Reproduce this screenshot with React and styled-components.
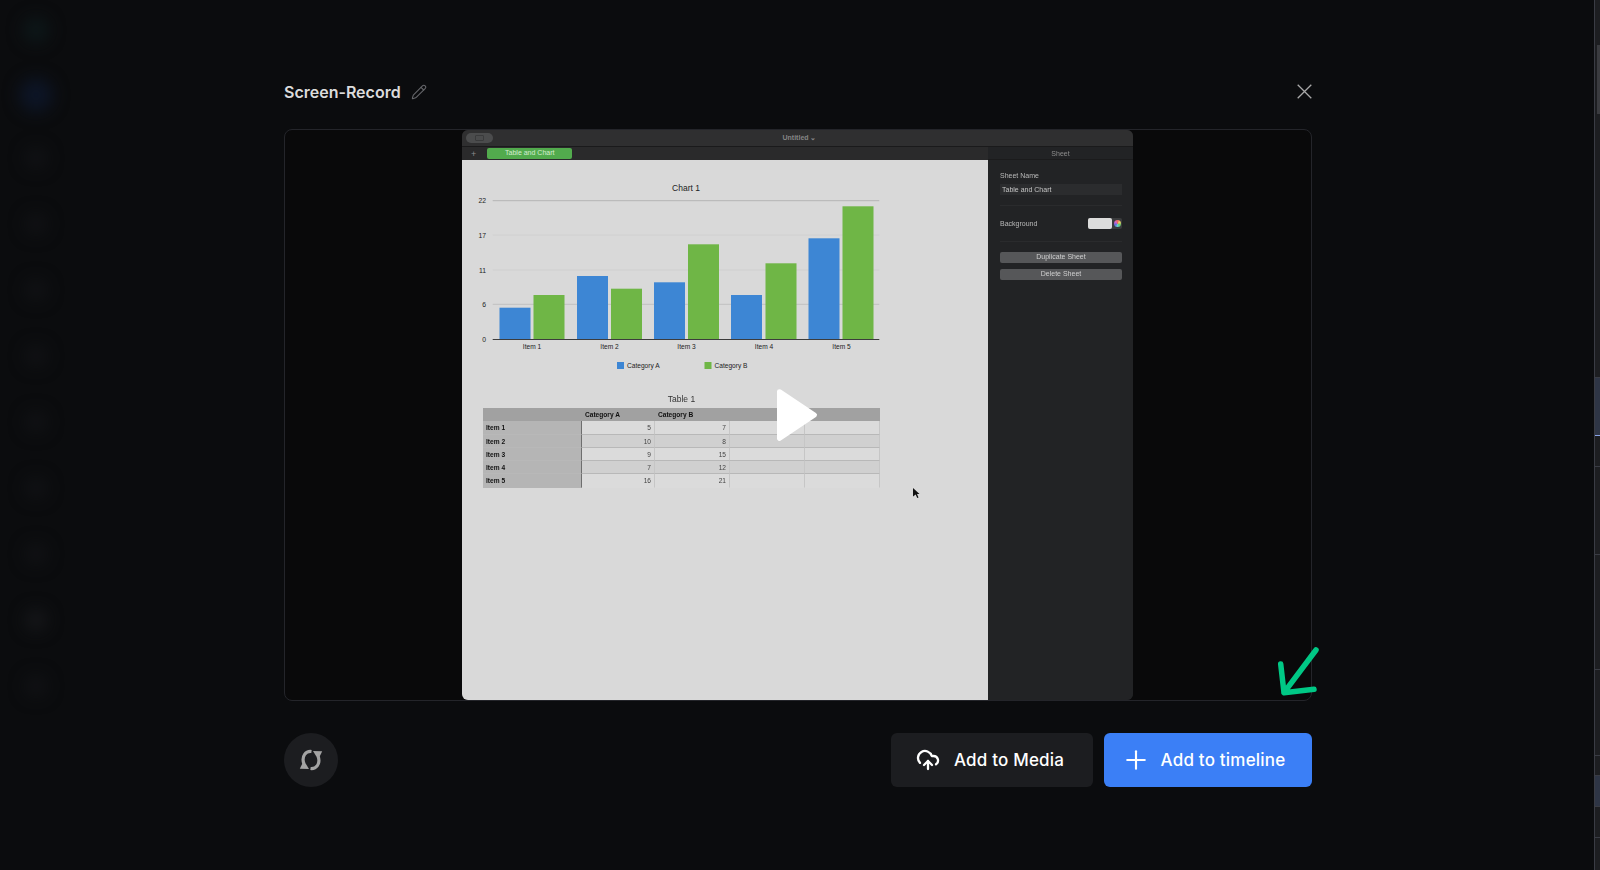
// App.jsx: "Screen-Record" preview dialog over the blurred editor

import React from "react";
import styled, { createGlobalStyle } from "styled-components";
import { CloudUpload, Pencil, Plus } from "lucide-react";

const GlobalStyle = createGlobalStyle`
  html, body {
    margin: 0;
    height: 100%;
    background: #0b0c0e;
    overflow: hidden;
    font-family: Inter, "Liberation Sans", sans-serif;
  }
  * { box-sizing: border-box; }
`;

const Page = styled.div`
  position: relative;
  width: 1600px;
  height: 870px;
  overflow: hidden;
  display: flex;
`;

/* the app behind the dialog, only just visible */
const Backdrop = styled.div`
  flex: 1;
  display: flex;
  filter: blur(8px);
`;

const NavRail = styled.div`
  width: 72px;
  padding-top: 17px;
  display: flex;
  flex-direction: column;
  align-items: center;
  gap: 44px;
`;

const NavBlob = styled.div`
  width: ${(p) => p.$size || 22}px;
  height: ${(p) => p.$size || 22}px;
  flex: none;
  border-radius: 50%;
  margin: ${(p) => p.$margin || 0};
  background: ${(p) => p.$color || "#111215"};
`;

const RightStrip = styled.div`
  width: 6px;
  height: 100%;
  background: #1d1e21;
  border-left: 1px solid #3a3c44;
  position: relative;
  display: flex;
  flex-direction: column;
`;

const StripThumb = styled.div`
  position: absolute;
  top: 45px;
  right: 0;
  width: 3px;
  height: 69px;
  background: #3a3b3f;
`;

const StripRow = styled.div`
  height: ${(p) => p.$h}px;
  flex: none;
  background: ${(p) => p.$bg || "transparent"};
  border-bottom: 1px solid ${(p) => p.$line || "#3a3c44"};
`;

const Overlay = styled.div`
  position: absolute;
  top: 0;
  left: 0;
  right: 4px;
  bottom: 0;
  display: flex;
  justify-content: center;
  padding-top: 80px;
`;

const Dialog = styled.div`
  width: 1028px;
  display: flex;
  flex-direction: column;
`;

const Header = styled.div`
  height: 24px;
  display: flex;
  align-items: center;
  justify-content: space-between;
  margin-bottom: 25px;
`;

const TitleWrap = styled.div`
  display: flex;
  align-items: center;
  gap: 10px;
  color: #65666a;
`;

const Title = styled.div`
  font-size: 16px;
  font-weight: 600;
  color: #dcdcdc;
`;

const CloseIcon = styled.svg`
  width: 15px;
  height: 15px;
  display: block;
  margin-top: -2px;
`;

const VideoBox = styled.div`
  position: relative;
  height: 572px;
  border: 1px solid #24252a;
  border-radius: 8px;
  background: #09090a;
  display: flex;
  justify-content: center;
`;

const PlayIcon = styled.svg`
  position: absolute;
  top: 50%;
  left: 50%;
  width: 41px;
  height: 54px;
  margin-left: -1px;
  transform: translate(-50%, -50%);
`;

const ArrowMark = styled.svg`
  position: absolute;
  right: -8px;
  bottom: 4px;
  width: 40px;
  height: 48px;
  overflow: visible;
`;

const CursorIcon = styled.svg`
  position: absolute;
  top: 358px;
  left: 628px;
  width: 7px;
  height: 10px;
`;

/* recorded spreadsheet window */
const Shot = styled.div`
  width: 671px;
  height: 100%;
  margin-left: -1px;
  border-radius: 6px;
  overflow: hidden;
  display: flex;
  flex-direction: column;
  font-family: "Liberation Sans", Arial, sans-serif;
  background: #222325;
  filter: blur(0.3px);
`;

const WindowBar = styled.div`
  height: 17px;
  flex: none;
  position: relative;
  background: #2f2f30;
  border-bottom: 1px solid #1a1a1b;
  display: flex;
  align-items: center;
  justify-content: center;
  padding: 0 0 1px 4px;
  font-size: 7px;
  font-weight: 700;
  color: #858585;
`;

const ViewPill = styled.div`
  position: absolute;
  left: 4px;
  top: 3px;
  width: 27px;
  height: 10px;
  border-radius: 5px;
  background: #4b4c4d;
  display: flex;
  align-items: center;
  justify-content: center;
`;

const PillGlyph = styled.div`
  width: 9px;
  height: 6px;
  border: 1px solid #3a3b3c;
  border-radius: 1px;
`;

const ShotBody = styled.div`
  flex: 1;
  display: flex;
  min-height: 0;
`;

const SheetColumn = styled.div`
  width: 526px;
  display: flex;
  flex-direction: column;
`;

const TabBar = styled.div`
  height: 13px;
  flex: none;
  background: #2a2a2b;
  display: flex;
  align-items: center;
  padding-left: 9px;
  gap: 11px;
  color: #8b8b8b;
  font-size: 9px;
`;

const SheetTab = styled.div`
  width: 85px;
  height: 10.5px;
  border-radius: 2px;
  background: #52ab4d;
  color: #d5ecd2;
  font-size: 7px;
  line-height: 10.5px;
  text-align: center;
`;

const Canvas = styled.div`
  flex: 1;
  background: #d9d9d9;
  padding-left: 21px;
  display: flex;
  flex-direction: column;
`;

const ChartSvg = styled.svg`
  display: block;
  width: 526px;
  height: 231px;
  flex: none;
  margin-left: -21px;
`;

const TableTitle = styled.div`
  width: 397px;
  height: 17px;
  font-size: 8.5px;
  color: #333;
  text-align: center;
  line-height: 16px;
`;

const TableGrid = styled.div`
  width: 397px;
  display: grid;
  grid-template-columns: 99px 73px 75px 75px 75px;
  grid-auto-rows: 13.3px;
`;

const Cell = styled.div`
  padding: 0 3px;
  font-size: 6.6px;
  line-height: 13.3px;
  color: ${(p) => (p.$stub || p.$head ? "#111" : "#444")};
  font-weight: ${(p) => (p.$stub || p.$head ? 700 : 400)};
  text-align: ${(p) => (p.$stub || p.$head ? "left" : "right")};
  background: ${(p) =>
    p.$head ? "#a1a1a1" : p.$stub ? "#b5b5b5" : p.$alt ? "#d0d0d0" : "#dbdbdb"};
  border-right: 1px solid ${(p) => (p.$head ? "#a1a1a1" : p.$stub ? "#6e6e6e" : "#c6c6c6")};
  border-bottom: 1px solid ${(p) => (p.$head ? "#a1a1a1" : p.$last ? "transparent" : "#b8b8b8")};
`;

const SheetPanel = styled.div`
  flex: 1;
  background: #222325;
  padding: 0 11px 0 12px;
  color: #b9b9b9;
  font-size: 7px;
  display: flex;
  flex-direction: column;
`;

const PanelHeader = styled.div`
  height: 13px;
  margin: 0 -11px 0 -12px;
  text-align: center;
  line-height: 14px;
  color: #8d8d8d;
  border-bottom: 1px solid #1b1b1c;
  flex: none;
`;

const FieldLabel = styled.div`
  margin-top: 11px;
  height: 13px;
  line-height: 9px;
`;

const FieldInput = styled.div`
  height: 11px;
  background: #2b2c2e;
  padding-left: 2px;
  line-height: 11px;
  color: #c4c4c4;
`;

const PanelRule = styled.div`
  height: 1px;
  background: #2a2b2d;
  margin: ${(p) => p.$margin};
`;

const BackgroundRow = styled.div`
  height: 11px;
  display: flex;
  align-items: center;
  justify-content: space-between;
`;

const SwatchWell = styled.div`
  width: 34px;
  height: 11px;
  border-radius: 2px;
  background: #3a3b3d;
  display: flex;
  align-items: center;
`;

const Swatch = styled.div`
  width: 24px;
  height: 100%;
  border-radius: 2px;
  background: #dcdcdc;
`;

const ColorWheel = styled.div`
  width: 7px;
  height: 7px;
  margin-left: 1.5px;
  border-radius: 50%;
  background: conic-gradient(#e66, #ec6, #6c6, #6cc, #66d, #c6c, #e66);
`;

const PanelButton = styled.div`
  height: 10.5px;
  margin-bottom: 6.5px;
  border-radius: 2px;
  background: #565759;
  color: #cfcfcf;
  text-align: center;
  line-height: 10.5px;
`;

const Footer = styled.div`
  margin-top: 32px;
  display: flex;
  align-items: center;
  gap: 11px;
`;

const RoundButton = styled.div`
  width: 54px;
  height: 54px;
  border-radius: 50%;
  background: #1c1d20;
  display: flex;
  align-items: center;
  justify-content: center;
  margin-right: auto;
`;

const ActionButton = styled.div`
  width: ${(p) => p.$width}px;
  height: 54px;
  padding-right: ${(p) => p.$pad}px;
  border-radius: 6px;
  background: ${(p) => p.$bg};
  color: #fff;
  font-size: 17px;
  font-weight: 500;
  letter-spacing: 0.2px;
  display: flex;
  align-items: center;
  justify-content: center;
  gap: ${(p) => p.$gap}px;
`;

const bars = [
  { x: 37.5, top: 147.7, color: "#3d86d4" },
  { x: 71.5, top: 135, color: "#6fb646" },
  { x: 115, top: 116, color: "#3d86d4" },
  { x: 149, top: 128.7, color: "#6fb646" },
  { x: 192, top: 122.3, color: "#3d86d4" },
  { x: 226, top: 84.3, color: "#6fb646" },
  { x: 269, top: 135, color: "#3d86d4" },
  { x: 303.5, top: 103.3, color: "#6fb646" },
  { x: 346.5, top: 78.3, color: "#3d86d4" },
  { x: 380.5, top: 46.3, color: "#6fb646" },
];

const gridLines = [
  { label: "22", y: 40.7, stroke: "#b4b4b4" },
  { label: "17", y: 75, stroke: "#d0d0d0" },
  { label: "11", y: 110, stroke: "#cfcfcf" },
  { label: "6", y: 144.3, stroke: "#c0c0c0" },
];

const itemLabels = [
  { name: "Item 1", x: 70 },
  { name: "Item 2", x: 147.5 },
  { name: "Item 3", x: 224.5 },
  { name: "Item 4", x: 302 },
  { name: "Item 5", x: 379.5 },
];

const tableRows = [
  ["Item 1", 5, 7],
  ["Item 2", 10, 8],
  ["Item 3", 9, 15],
  ["Item 4", 7, 12],
  ["Item 5", 16, 21],
];

const Chart = () => (
  <ChartSvg viewBox="0 0 526 231" fontFamily="Liberation Sans, Arial, sans-serif">
    <text x="224" y="31" fontSize="8.5" textAnchor="middle" fill="#222">
      Chart 1
    </text>
    {gridLines.map((line) => (
      <g key={line.label}>
        <line x1="30.7" x2="417.3" y1={line.y} y2={line.y} stroke={line.stroke} />
        <text x="24" y={line.y + 2.5} fontSize="6.8" textAnchor="end" fill="#222">
          {line.label}
        </text>
      </g>
    ))}
    {bars.map((bar) => (
      <rect
        key={bar.x}
        x={bar.x}
        y={bar.top}
        width="31"
        height={179.3 - bar.top}
        fill={bar.color}
      />
    ))}
    <line x1="30.7" x2="417.3" y1="179.5" y2="179.5" stroke="#3c3c3c" />
    <text x="24" y="182" fontSize="6.8" textAnchor="end" fill="#222">
      0
    </text>
    {itemLabels.map((item) => (
      <text key={item.name} x={item.x} y="188.500" fontSize="6.6" textAnchor="middle" fill="#222">
        {item.name}
      </text>
    ))}
    <rect x="155" y="202" width="7" height="7" fill="#3d86d4" />
    <text x="165" y="208" fontSize="6.6" fill="#222">
      Category A
    </text>
    <rect x="242.5" y="202" width="7" height="7" fill="#6fb646" />
    <text x="252.5" y="208" fontSize="6.6" fill="#222">
      Category B
    </text>
  </ChartSvg>
);

const SheetTable = () => (
  <TableGrid>
    <Cell $head />
    <Cell $head>Category A</Cell>
    <Cell $head>Category B</Cell>
    <Cell $head />
    <Cell $head />
    {tableRows.map(([name, a, b], i) => {
      const alt = i % 2 === 1;
      const last = i === tableRows.length - 1;
      return (
        <React.Fragment key={name}>
          <Cell $stub $last={last}>{name}</Cell>
          <Cell $alt={alt} $last={last}>{a}</Cell>
          <Cell $alt={alt} $last={last}>{b}</Cell>
          <Cell $alt={alt} $last={last} />
          <Cell $alt={alt} $last={last} />
        </React.Fragment>
      );
    })}
  </TableGrid>
);

const RecordedWindow = () => (
  <Shot>
    <WindowBar>
      <ViewPill>
        <PillGlyph />
      </ViewPill>
      Untitled ⌄
    </WindowBar>
    <ShotBody>
      <SheetColumn>
        <TabBar>
          +<SheetTab>Table and Chart</SheetTab>
        </TabBar>
        <Canvas>
          <Chart />
          <TableTitle>Table 1</TableTitle>
          <SheetTable />
        </Canvas>
      </SheetColumn>
      <SheetPanel>
        <PanelHeader>Sheet</PanelHeader>
        <FieldLabel>Sheet Name</FieldLabel>
        <FieldInput>Table and Chart</FieldInput>
        <PanelRule $margin="10px 0 12px" />
        <BackgroundRow>
          Background
          <SwatchWell>
            <Swatch />
            <ColorWheel />
          </SwatchWell>
        </BackgroundRow>
        <PanelRule $margin="12px 0 10px" />
        <PanelButton>Duplicate Sheet</PanelButton>
        <PanelButton>Delete Sheet</PanelButton>
      </SheetPanel>
    </ShotBody>
  </Shot>
);

const SyncIcon = () => (
  <svg width="24" height="24" viewBox="0 0 24 24" fill="none" stroke="#a3a3a3" strokeWidth="3.200">
    <path d="M12.500 3.500C7 2.800 2.300 8 4.800 15.500" />
    <path d="M11.500 20.500C17 21.200 21.700 16 19.200 8.500" />
    <path d="M.8 20.800l9.200.2-5.200-8.500z" fill="#a3a3a3" stroke="none" />
    <path d="M23.200 3.200l-9.200-.2 5.200 8.500z" fill="#a3a3a3" stroke="none" />
  </svg>
);

const App = () => {
  return (
    <>
      <GlobalStyle />
      <Page>
        <Backdrop>
          <NavRail>
            <NavBlob $size={26} $color="#0d1719" />
            <NavBlob $size={34} $color="#0d1526" $margin="-9px 0" />
            {[...Array(9)].map((_, i) => (
              <NavBlob key={i} $color={i === 7 ? "#16171a" : "#111215"} />
            ))}
          </NavRail>
        </Backdrop>
        <RightStrip>
          <StripThumb />
          <StripRow $h={378} />
          <StripRow $h={58} $bg="#2e3545" $line="#8aa4e8" />
          <StripRow $h={31} />
          <StripRow $h={88} />
          <StripRow $h={115} />
          <StripRow $h={86} />
          <StripRow $h={20} />
          <StripRow $h={31} $bg="#2e3545" />
          <StripRow $h={31} />
        </RightStrip>
        <Overlay>
          <Dialog>
            <Header>
              <TitleWrap>
                <Title>Screen-Record</Title>
                <Pencil size={16} strokeWidth={1.6} />
              </TitleWrap>
              <CloseIcon viewBox="0 0 15 15" fill="none" stroke="#a9a9a9" strokeWidth="1.300">
                <path d="M.7.7l13.600 13.600M14.300.7L.7 14.300" />
              </CloseIcon>
            </Header>
            <VideoBox>
              <RecordedWindow />
              <PlayIcon viewBox="0 0 42 54" fill="#fff" stroke="#fff" strokeWidth="5" strokeLinejoin="round">
                <path d="M3 3L39 27 3 51z" />
              </PlayIcon>
              <CursorIcon viewBox="0 0 7 10" fill="#111">
                <path d="M0 0l6.500 6H4l1.500 3.500-1.300.5L2.700 6.500 0 8.500z" />
              </CursorIcon>
              <ArrowMark viewBox="0 0 40 48" fill="none" stroke="#00c885" strokeWidth="5.500" strokeLinecap="round" strokeLinejoin="round">
                <path d="M37 2L5 44.700M1.700 16L5 44.700 35 41.300" />
              </ArrowMark>
            </VideoBox>
            <Footer>
              <RoundButton>
                <SyncIcon />
              </RoundButton>
              <ActionButton $width={202} $bg="#1c1d20" $gap={14} $pad={4}>
                <CloudUpload size={24} strokeWidth={2.3} />
                Add to Media
              </ActionButton>
              <ActionButton $width={208} $bg="#3b7ff6" $gap={10} $pad={10}>
                <Plus size={30} strokeWidth={1.7} />
                Add to timeline
              </ActionButton>
            </Footer>
          </Dialog>
        </Overlay>
      </Page>
    </>
  );
};

export default App;
